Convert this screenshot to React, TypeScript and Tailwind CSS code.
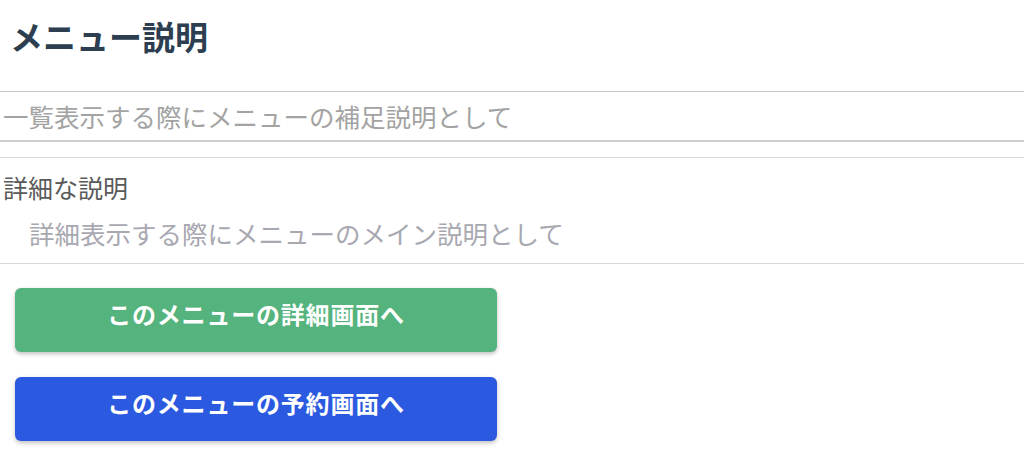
const FONT = "font-['Noto_Sans_CJK_JP','Noto_Sans',sans-serif]";

export default function App() {
  return (
    <div className={`${FONT} w-[1024px] h-[459px] bg-white overflow-hidden`}>
      {/* Title */}
      <div className="h-[91px] pl-[10px] pt-[16px]">
        <h2 className="text-[33px] leading-[40px] font-bold text-[#2c3e50]">メニュー説明</h2>
      </div>

      {/* Short description input */}
      <div className="h-[51px] border-t border-b-2 border-t-[#c9c9c9] border-b-[#cdcdcd] flex items-center pl-[3px]">
        <input
          className="w-full outline-none bg-transparent text-[25.5px] leading-[34px] text-[#999] placeholder:text-[#a3a3a3]"
          placeholder="一覧表示する際にメニューの補足説明として"
        />
      </div>

      {/* Detailed description */}
      <div className="mt-[15px] border-t border-b border-[#d6d6d6] pt-[13px] pb-[13px]">
        <label className="block pl-[3px] text-[25px] leading-[32px] text-[#5a5a5a]">詳細な説明</label>
        <textarea
          rows={1}
          className="block mt-[13px] pl-[29px] w-full resize-none outline-none bg-transparent text-[25.5px] leading-[34px] h-[34px] overflow-hidden placeholder:text-[#a8a8b0]"
          placeholder="詳細表示する際にメニューのメイン説明として"
        />
      </div>

      {/* Buttons */}
      <div className="flex flex-col gap-[25px] mt-[24px] pl-[15px]">
        <button className="w-[482px] h-[64px] rounded-[6px] bg-[#55b37e] shadow-[0_2px_4px_rgba(0,0,0,0.25)] text-white text-[24px] leading-[32px] font-bold tracking-[0.8px] flex items-start justify-center pt-[10px]">
          このメニューの詳細画面へ
        </button>
        <button className="w-[482px] h-[64px] rounded-[6px] bg-[#2b5ae0] shadow-[0_2px_4px_rgba(0,0,0,0.25)] text-white text-[24px] leading-[32px] font-bold tracking-[0.8px] flex items-start justify-center pt-[10px]">
          このメニューの予約画面へ
        </button>
      </div>
    </div>
  );
}
